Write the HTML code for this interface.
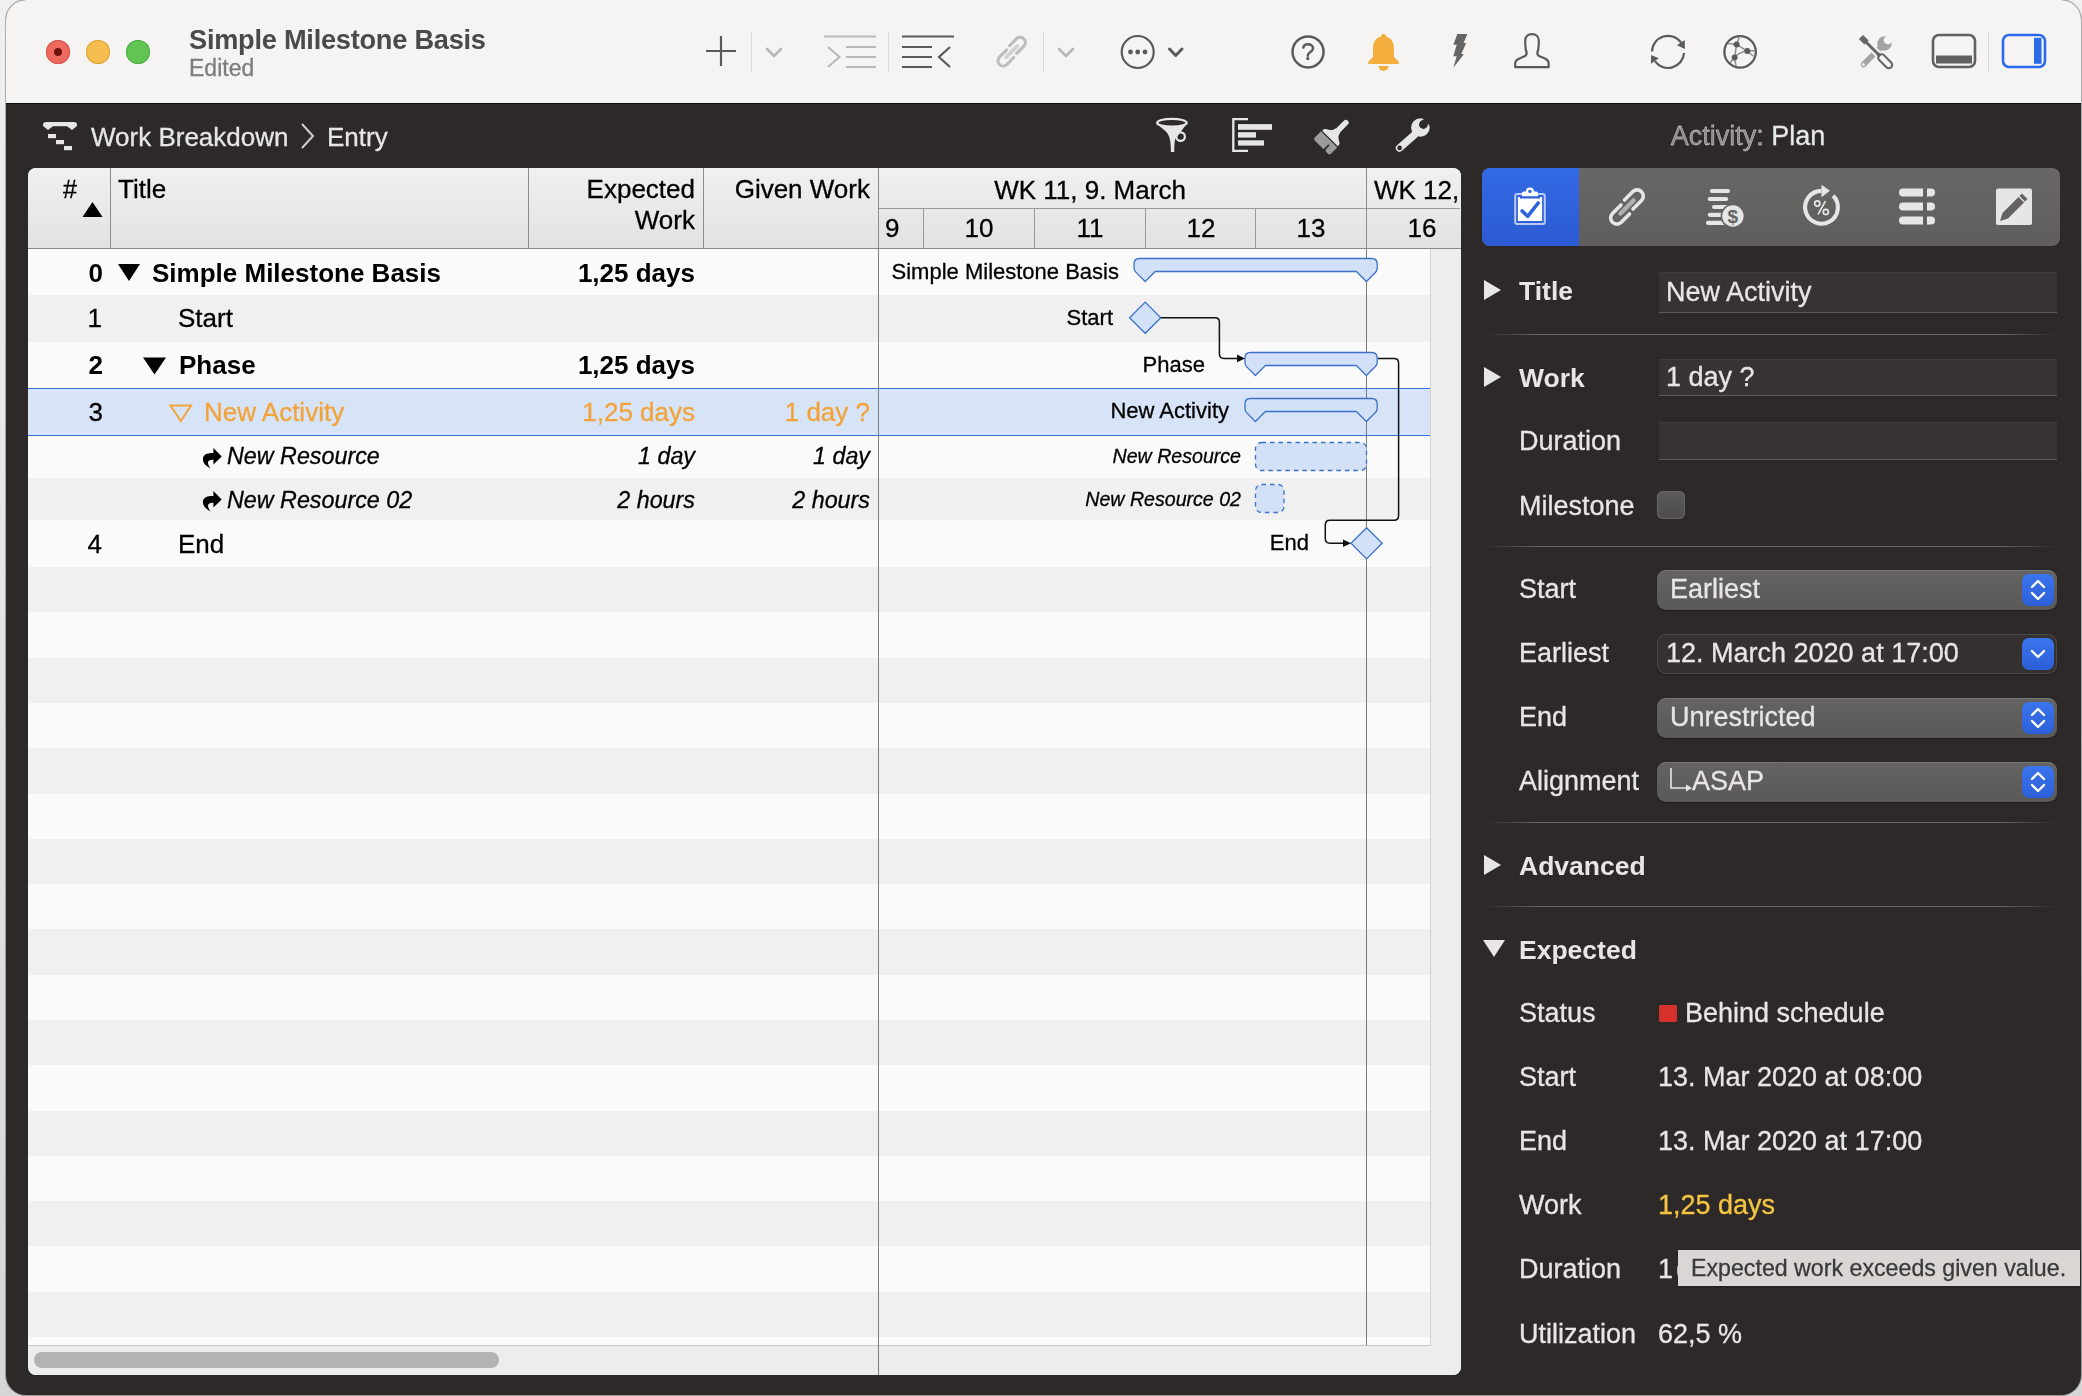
<!DOCTYPE html><html><head><meta charset="utf-8"><style>
html,body{margin:0;padding:0;}
body{width:2082px;height:1396px;position:relative;overflow:hidden;background:linear-gradient(#f0f0f0,#d6d6d6);font-family:"Liberation Sans", sans-serif;}
.r{position:absolute;}
.t{position:absolute;white-space:nowrap;will-change:transform;}
</style></head><body>
<div class="r" style="left:6px;top:0;width:2075px;height:1395px;border-radius:20px;background:#2c2928;box-shadow:0 0 0 1px rgba(0,0,0,0.28);overflow:hidden;"></div>
<div class="r" style="left:6px;top:0;width:2075px;height:103px;border-radius:20px 20px 0 0;background:#f5f4f3;"></div>
<div class="r" style="left:6px;top:103px;width:2075px;height:1px;background:#0e0e0e;"></div>
<div class="r" style="left:46px;top:40px;width:24px;height:24px;border-radius:50%;background:#ee6a5f;box-shadow:inset 0 0 0 1px #d5534a;"></div>
<div class="r" style="left:86px;top:40px;width:24px;height:24px;border-radius:50%;background:#f5be4f;box-shadow:inset 0 0 0 1px #d9a23a;"></div>
<div class="r" style="left:126px;top:40px;width:24px;height:24px;border-radius:50%;background:#61c554;box-shadow:inset 0 0 0 1px #4eab42;"></div>
<div class="r" style="left:54px;top:48px;width:8px;height:8px;border-radius:50%;background:#6e120c;"></div>
<div class="t" style="left:188.5px;top:25.5px;font-size:27.2px;line-height:27.2px;color:#4a4a4a;font-weight:bold;font-style:normal;letter-spacing:-0.25px;">Simple Milestone Basis</div>
<div class="t" style="left:189.0px;top:57.0px;font-size:23px;line-height:23px;color:#7d7d7d;font-weight:normal;font-style:normal;-webkit-text-stroke:0.3px #7d7d7d;">Edited</div>
<svg class="r" style="left:40px;top:118px;" width="40" height="36" viewBox="0 0 40 36"><g fill="#e6e6e6"><path d="M6,4 H34 Q37,4 37,7 V8 L32,12 L27,8.3 H13 L8,12 L3,8 V7 Q3,4 6,4 Z"/>
<rect x="8" y="16" width="8" height="4.2"/><rect x="16" y="22" width="8" height="4.2"/><rect x="24" y="28" width="8" height="4.2"/></g></svg>
<div class="t" style="left:91.0px;top:124.0px;font-size:26px;line-height:26px;color:#e6e6e6;font-weight:normal;font-style:normal;-webkit-text-stroke:0.3px #e6e6e6;">Work Breakdown</div>
<svg class="r" style="left:298px;top:122px;" width="20" height="28" viewBox="0 0 20 28"><path d="M4,2 L15,14 L4,26" fill="none" stroke="#cfcfcf" stroke-width="2"/></svg>
<div class="t" style="left:327.0px;top:124.0px;font-size:26px;line-height:26px;color:#e6e6e6;font-weight:normal;font-style:normal;-webkit-text-stroke:0.3px #e6e6e6;">Entry</div>
<div class="t" style="left:1147.5px;width:1200px;text-align:center;top:123.4px;font-size:27px;line-height:27px;color:#e8e8e8;font-weight:normal;font-style:normal;-webkit-text-stroke:0.3px #e8e8e8;"><span style="color:#8d8b8a">Activity:</span> Plan</div>
<div class="r" style="left:28px;top:168px;width:1433px;height:1207px;border-radius:8px;background:#ededed;overflow:hidden;" id="panel"></div>
<div class="r" style="left:28px;top:168px;width:1433px;height:80px;border-radius:8px 8px 0 0;background:linear-gradient(#f0f0f0,#e2e2e2);"></div>
<div class="r" style="left:28px;top:248px;width:1433px;height:1px;background:#8a8a8a;"></div>
<div class="r" style="left:110px;top:168px;width:1px;height:80px;background:#8c8c8c;"></div>
<div class="r" style="left:528px;top:168px;width:1px;height:80px;background:#8c8c8c;"></div>
<div class="r" style="left:703px;top:168px;width:1px;height:80px;background:#8c8c8c;"></div>
<div class="r" style="left:878px;top:168px;width:1px;height:1207px;background:#8a8a8a;"></div>
<div class="r" style="left:879px;top:208px;width:581px;height:1px;background:#9a9a9a;"></div>
<div class="r" style="left:923px;top:208px;width:1px;height:40px;background:#9a9a9a;"></div>
<div class="r" style="left:1034px;top:208px;width:1px;height:40px;background:#9a9a9a;"></div>
<div class="r" style="left:1145px;top:208px;width:1px;height:40px;background:#9a9a9a;"></div>
<div class="r" style="left:1255px;top:208px;width:1px;height:40px;background:#9a9a9a;"></div>
<div class="r" style="left:1366px;top:168px;width:1px;height:80px;background:#8c8c8c;"></div>
<div class="t" style="left:-1123.0px;width:1200px;text-align:right;top:176.8px;font-size:25px;line-height:25px;color:#000;font-weight:normal;font-style:normal;-webkit-text-stroke:0.3px #000;">#</div>
<svg class="r" style="left:82px;top:202px;" width="21" height="16" viewBox="0 0 21 16"><path d="M10.5,0 L20.5,15 H0.5 Z" fill="#000"/></svg>
<div class="t" style="left:118.0px;top:176.0px;font-size:26px;line-height:26px;color:#000;font-weight:normal;font-style:normal;-webkit-text-stroke:0.3px #000;">Title</div>
<div class="t" style="left:-505.0px;width:1200px;text-align:right;top:176.0px;font-size:26px;line-height:26px;color:#000;font-weight:normal;font-style:normal;-webkit-text-stroke:0.3px #000;">Expected</div>
<div class="t" style="left:-505.0px;width:1200px;text-align:right;top:207.0px;font-size:26px;line-height:26px;color:#000;font-weight:normal;font-style:normal;-webkit-text-stroke:0.3px #000;">Work</div>
<div class="t" style="left:-330.0px;width:1200px;text-align:right;top:176.0px;font-size:26px;line-height:26px;color:#000;font-weight:normal;font-style:normal;-webkit-text-stroke:0.3px #000;">Given Work</div>
<div class="t" style="left:489.6px;width:1200px;text-align:center;top:176.5px;font-size:26px;line-height:26px;color:#000;font-weight:normal;font-style:normal;-webkit-text-stroke:0.3px #000;">WK 11, 9. March</div>
<div class="t" style="left:1374.0px;top:176.5px;font-size:26px;line-height:26px;color:#000;font-weight:normal;font-style:normal;-webkit-text-stroke:0.3px #000;">WK 12,</div>
<div class="t" style="left:885.0px;top:215.0px;font-size:26px;line-height:26px;color:#000;font-weight:normal;font-style:normal;-webkit-text-stroke:0.3px #000;">9</div>
<div class="t" style="left:379.0px;width:1200px;text-align:center;top:215.0px;font-size:26px;line-height:26px;color:#000;font-weight:normal;font-style:normal;-webkit-text-stroke:0.3px #000;">10</div>
<div class="t" style="left:490.0px;width:1200px;text-align:center;top:215.0px;font-size:26px;line-height:26px;color:#000;font-weight:normal;font-style:normal;-webkit-text-stroke:0.3px #000;">11</div>
<div class="t" style="left:600.5px;width:1200px;text-align:center;top:215.0px;font-size:26px;line-height:26px;color:#000;font-weight:normal;font-style:normal;-webkit-text-stroke:0.3px #000;">12</div>
<div class="t" style="left:711.0px;width:1200px;text-align:center;top:215.0px;font-size:26px;line-height:26px;color:#000;font-weight:normal;font-style:normal;-webkit-text-stroke:0.3px #000;">13</div>
<div class="t" style="left:821.5px;width:1200px;text-align:center;top:215.0px;font-size:26px;line-height:26px;color:#000;font-weight:normal;font-style:normal;-webkit-text-stroke:0.3px #000;">16</div>
<div class="r" style="left:28px;top:249px;width:850px;height:46px;background:#fafafa;"></div>
<div class="r" style="left:879px;top:249px;width:552px;height:46px;background:#fafafa;"></div>
<div class="r" style="left:28px;top:295px;width:850px;height:47px;background:#f0f0f0;"></div>
<div class="r" style="left:879px;top:295px;width:552px;height:47px;background:#f0f0f0;"></div>
<div class="r" style="left:28px;top:342px;width:850px;height:46px;background:#fafafa;"></div>
<div class="r" style="left:879px;top:342px;width:552px;height:46px;background:#fafafa;"></div>
<div class="r" style="left:28px;top:388px;width:850px;height:48px;background:#d7e3f6;"></div>
<div class="r" style="left:879px;top:388px;width:552px;height:48px;background:#d7e3f6;"></div>
<div class="r" style="left:28px;top:436px;width:850px;height:42px;background:#fafafa;"></div>
<div class="r" style="left:879px;top:436px;width:552px;height:42px;background:#fafafa;"></div>
<div class="r" style="left:28px;top:478px;width:850px;height:42px;background:#f0f0f0;"></div>
<div class="r" style="left:879px;top:478px;width:552px;height:42px;background:#f0f0f0;"></div>
<div class="r" style="left:28px;top:520px;width:850px;height:47px;background:#fafafa;"></div>
<div class="r" style="left:879px;top:520px;width:552px;height:47px;background:#fafafa;"></div>
<div class="r" style="left:28px;top:567px;width:850px;height:45px;background:#f0f0f0;"></div>
<div class="r" style="left:879px;top:567px;width:552px;height:45px;background:#f0f0f0;"></div>
<div class="r" style="left:28px;top:612px;width:850px;height:46px;background:#fafafa;"></div>
<div class="r" style="left:879px;top:612px;width:552px;height:46px;background:#fafafa;"></div>
<div class="r" style="left:28px;top:658px;width:850px;height:45px;background:#f0f0f0;"></div>
<div class="r" style="left:879px;top:658px;width:552px;height:45px;background:#f0f0f0;"></div>
<div class="r" style="left:28px;top:703px;width:850px;height:45px;background:#fafafa;"></div>
<div class="r" style="left:879px;top:703px;width:552px;height:45px;background:#fafafa;"></div>
<div class="r" style="left:28px;top:748px;width:850px;height:46px;background:#f0f0f0;"></div>
<div class="r" style="left:879px;top:748px;width:552px;height:46px;background:#f0f0f0;"></div>
<div class="r" style="left:28px;top:794px;width:850px;height:45px;background:#fafafa;"></div>
<div class="r" style="left:879px;top:794px;width:552px;height:45px;background:#fafafa;"></div>
<div class="r" style="left:28px;top:839px;width:850px;height:45px;background:#f0f0f0;"></div>
<div class="r" style="left:879px;top:839px;width:552px;height:45px;background:#f0f0f0;"></div>
<div class="r" style="left:28px;top:884px;width:850px;height:45px;background:#fafafa;"></div>
<div class="r" style="left:879px;top:884px;width:552px;height:45px;background:#fafafa;"></div>
<div class="r" style="left:28px;top:929px;width:850px;height:46px;background:#f0f0f0;"></div>
<div class="r" style="left:879px;top:929px;width:552px;height:46px;background:#f0f0f0;"></div>
<div class="r" style="left:28px;top:975px;width:850px;height:45px;background:#fafafa;"></div>
<div class="r" style="left:879px;top:975px;width:552px;height:45px;background:#fafafa;"></div>
<div class="r" style="left:28px;top:1020px;width:850px;height:45px;background:#f0f0f0;"></div>
<div class="r" style="left:879px;top:1020px;width:552px;height:45px;background:#f0f0f0;"></div>
<div class="r" style="left:28px;top:1065px;width:850px;height:46px;background:#fafafa;"></div>
<div class="r" style="left:879px;top:1065px;width:552px;height:46px;background:#fafafa;"></div>
<div class="r" style="left:28px;top:1111px;width:850px;height:45px;background:#f0f0f0;"></div>
<div class="r" style="left:879px;top:1111px;width:552px;height:45px;background:#f0f0f0;"></div>
<div class="r" style="left:28px;top:1156px;width:850px;height:45px;background:#fafafa;"></div>
<div class="r" style="left:879px;top:1156px;width:552px;height:45px;background:#fafafa;"></div>
<div class="r" style="left:28px;top:1201px;width:850px;height:45px;background:#f0f0f0;"></div>
<div class="r" style="left:879px;top:1201px;width:552px;height:45px;background:#f0f0f0;"></div>
<div class="r" style="left:28px;top:1246px;width:850px;height:46px;background:#fafafa;"></div>
<div class="r" style="left:879px;top:1246px;width:552px;height:46px;background:#fafafa;"></div>
<div class="r" style="left:28px;top:1292px;width:850px;height:45px;background:#f0f0f0;"></div>
<div class="r" style="left:879px;top:1292px;width:552px;height:45px;background:#f0f0f0;"></div>
<div class="r" style="left:28px;top:1337px;width:850px;height:8px;background:#fafafa;"></div>
<div class="r" style="left:879px;top:1337px;width:552px;height:8px;background:#fafafa;"></div>
<div class="r" style="left:28px;top:388px;width:1403px;height:1px;background:#3a72dc;"></div>
<div class="r" style="left:28px;top:435px;width:1403px;height:1px;background:#3a72dc;"></div>
<div class="r" style="left:878px;top:248px;width:1px;height:1127px;background:#7e7e7e;"></div>
<div class="r" style="left:1431px;top:249px;width:30px;height:1096px;background:#ededed;"></div>
<div class="r" style="left:1430px;top:249px;width:1px;height:1096px;background:#d2d2d2;"></div>
<div class="r" style="left:28px;top:1345px;width:1403px;height:1px;background:#c6c6c6;"></div>
<div class="r" style="left:28px;top:1346px;width:1433px;height:29px;background:#ededed;border-radius:0 0 8px 8px;"></div>
<div class="r" style="left:878px;top:1345px;width:1px;height:30px;background:#7e7e7e;"></div>
<div class="r" style="left:34px;top:1352px;width:465px;height:16px;border-radius:8px;background:#b3b3b3;"></div>
<div class="r" style="left:1366px;top:249px;width:1px;height:1096px;background:#7a7a7a;"></div>
<div class="t" style="left:-1097.0px;width:1200px;text-align:right;top:260.0px;font-size:26px;line-height:26px;color:#000;font-weight:bold;font-style:normal;">0</div>
<svg class="r" style="left:117px;top:263px;" width="24" height="19" viewBox="0 0 24 19"><path d="M1,1 H23 L12,18 Z" fill="#000"/></svg>
<div class="t" style="left:152.0px;top:260.0px;font-size:26px;line-height:26px;color:#000;font-weight:bold;font-style:normal;">Simple Milestone Basis</div>
<div class="t" style="left:-505.0px;width:1200px;text-align:right;top:260.0px;font-size:26px;line-height:26px;color:#000;font-weight:bold;font-style:normal;">1,25 days</div>
<div class="t" style="left:-1098.0px;width:1200px;text-align:right;top:305.0px;font-size:26px;line-height:26px;color:#000;font-weight:normal;font-style:normal;-webkit-text-stroke:0.3px #000;">1</div>
<div class="t" style="left:177.5px;top:305.0px;font-size:26px;line-height:26px;color:#000;font-weight:normal;font-style:normal;-webkit-text-stroke:0.3px #000;">Start</div>
<div class="t" style="left:-1097.0px;width:1200px;text-align:right;top:352.0px;font-size:26px;line-height:26px;color:#000;font-weight:bold;font-style:normal;">2</div>
<svg class="r" style="left:142px;top:356px;" width="25" height="19" viewBox="0 0 25 19"><path d="M1,1.5 H24 L12.5,18.5 Z" fill="#000"/></svg>
<div class="t" style="left:178.5px;top:352.0px;font-size:26px;line-height:26px;color:#000;font-weight:bold;font-style:normal;">Phase</div>
<div class="t" style="left:-505.0px;width:1200px;text-align:right;top:352.0px;font-size:26px;line-height:26px;color:#000;font-weight:bold;font-style:normal;">1,25 days</div>
<div class="t" style="left:-1097.0px;width:1200px;text-align:right;top:399.0px;font-size:26px;line-height:26px;color:#000;font-weight:normal;font-style:normal;-webkit-text-stroke:0.3px #000;">3</div>
<svg class="r" style="left:168px;top:403px;" width="26" height="20" viewBox="0 0 26 20"><path d="M2.5,2.5 H23 L12.75,18 Z" fill="none" stroke="#f2a33a" stroke-width="2"/></svg>
<div class="t" style="left:204.0px;top:399.0px;font-size:26px;line-height:26px;color:#f2a33a;font-weight:normal;font-style:normal;-webkit-text-stroke:0.3px #f2a33a;">New Activity</div>
<div class="t" style="left:-505.0px;width:1200px;text-align:right;top:399.0px;font-size:26px;line-height:26px;color:#f2a33a;font-weight:normal;font-style:normal;-webkit-text-stroke:0.3px #f2a33a;">1,25 days</div>
<div class="t" style="left:-330.0px;width:1200px;text-align:right;top:399.0px;font-size:26px;line-height:26px;color:#f2a33a;font-weight:normal;font-style:normal;-webkit-text-stroke:0.3px #f2a33a;">1 day ?</div>
<svg class="r" style="left:195px;top:440px;" width="30" height="32" viewBox="0 0 30 32"><path d="M18.4,8 L26.7,16.4 L18.4,24.4 V19.8 C15,19.6 12.5,20.8 13,23.5 C13.5,25.5 14.5,27 15.5,28.6 C11,26 8,23 7.9,19.5 C7.8,15 11,13 18.4,13 Z" fill="#000"/></svg>
<div class="t" style="left:227.0px;top:445.3px;font-size:23.3px;line-height:23.3px;color:#000;font-weight:normal;font-style:italic;-webkit-text-stroke:0.3px #000;">New Resource</div>
<div class="t" style="left:-505.0px;width:1200px;text-align:right;top:445.3px;font-size:23.3px;line-height:23.3px;color:#000;font-weight:normal;font-style:italic;-webkit-text-stroke:0.3px #000;">1 day</div>
<div class="t" style="left:-330.0px;width:1200px;text-align:right;top:445.3px;font-size:23.3px;line-height:23.3px;color:#000;font-weight:normal;font-style:italic;-webkit-text-stroke:0.3px #000;">1 day</div>
<svg class="r" style="left:195px;top:483px;" width="30" height="32" viewBox="0 0 30 32"><path d="M18.4,8 L26.7,16.4 L18.4,24.4 V19.8 C15,19.6 12.5,20.8 13,23.5 C13.5,25.5 14.5,27 15.5,28.6 C11,26 8,23 7.9,19.5 C7.8,15 11,13 18.4,13 Z" fill="#000"/></svg>
<div class="t" style="left:227.0px;top:488.8px;font-size:23.3px;line-height:23.3px;color:#000;font-weight:normal;font-style:italic;-webkit-text-stroke:0.3px #000;">New Resource 02</div>
<div class="t" style="left:-505.0px;width:1200px;text-align:right;top:488.8px;font-size:23.3px;line-height:23.3px;color:#000;font-weight:normal;font-style:italic;-webkit-text-stroke:0.3px #000;">2 hours</div>
<div class="t" style="left:-330.0px;width:1200px;text-align:right;top:488.8px;font-size:23.3px;line-height:23.3px;color:#000;font-weight:normal;font-style:italic;-webkit-text-stroke:0.3px #000;">2 hours</div>
<div class="t" style="left:-1098.0px;width:1200px;text-align:right;top:531.0px;font-size:26px;line-height:26px;color:#000;font-weight:normal;font-style:normal;-webkit-text-stroke:0.3px #000;">4</div>
<div class="t" style="left:177.5px;top:531.0px;font-size:26px;line-height:26px;color:#000;font-weight:normal;font-style:normal;-webkit-text-stroke:0.3px #000;">End</div>
<svg class="r" style="left:0;top:0" width="2082" height="1396" viewBox="0 0 2082 1396"><path d="M1139.5,258.5 H1371.7 Q1377.2,258.5 1377.2,264.0 V268.20000000000005 Q1377.2,270.70000000000005 1375.4,272.50000000000006 L1366.4,281.5 L1356.4,271.5 H1155.2 L1145.2,281.5 L1135.8,272.09999999999997 Q1134,270.29999999999995 1134,267.79999999999995 V264.0 Q1134,258.5 1139.5,258.5 Z" fill="#d3e1f8" stroke="#3b71c6" stroke-width="1.3" stroke-linejoin="round"/><path d="M1250.5,352.5 H1371.7 Q1377.2,352.5 1377.2,358.0 V362.20000000000005 Q1377.2,364.70000000000005 1375.4,366.50000000000006 L1366.4,375.5 L1356.4,365.5 H1265.4 L1255.4,375.5 L1246.8,366.8999999999999 Q1245,365.0999999999999 1245,362.5999999999999 V358.0 Q1245,352.5 1250.5,352.5 Z" fill="#d3e1f8" stroke="#3b71c6" stroke-width="1.3" stroke-linejoin="round"/><path d="M1250.5,398.5 H1371.7 Q1377.2,398.5 1377.2,404.0 V408.20000000000005 Q1377.2,410.70000000000005 1375.4,412.50000000000006 L1366.4,421.5 L1356.4,411.5 H1265.4 L1255.4,421.5 L1246.8,412.8999999999999 Q1245,411.0999999999999 1245,408.5999999999999 V404.0 Q1245,398.5 1250.5,398.5 Z" fill="#d3e1f8" stroke="#3b71c6" stroke-width="1.3" stroke-linejoin="round"/><path d="M1145.2,302.09999999999997 L1160.8,317.7 L1145.2,333.3 L1129.6000000000001,317.7 Z" fill="#d3e1f8" stroke="#3b71c6" stroke-width="1.3"/><path d="M1366.6,527.6999999999999 L1382.1999999999998,543.3 L1366.6,558.9 L1351.0,543.3 Z" fill="#d3e1f8" stroke="#3b71c6" stroke-width="1.3"/><rect x="1255.5" y="442.5" width="111" height="28" rx="6" fill="#d3e1f8" stroke="#3b71c6" stroke-width="1.3" stroke-dasharray="4.5 4"/><rect x="1255.5" y="484.5" width="28.5" height="28" rx="6" fill="#d3e1f8" stroke="#3b71c6" stroke-width="1.3" stroke-dasharray="4.5 4"/><path d="M1161,317.7 H1215 Q1219.4,317.7 1219.4,322 V354 Q1219.4,358.4 1224,358.4 H1238" fill="none" stroke="#111" stroke-width="1.5"/><path d="M1237,354.6 L1245,358.4 L1237,362.2 Z" fill="#111"/><path d="M1378,358.4 H1394 Q1398.6,358.4 1398.6,363 V515.5 Q1398.6,520.3 1394,520.3 H1330 Q1325.3,520.3 1325.3,525 V538.6 Q1325.3,543.3 1330,543.3 H1344" fill="none" stroke="#111" stroke-width="1.5"/><path d="M1343,539.5 L1351,543.3 L1343,547.1 Z" fill="#111"/></svg>
<div class="t" style="left:-81.5px;width:1200px;text-align:right;top:261.4px;font-size:22px;line-height:22px;color:#000;font-weight:normal;font-style:normal;-webkit-text-stroke:0.3px #000;">Simple Milestone Basis</div>
<div class="t" style="left:-87.5px;width:1200px;text-align:right;top:307.4px;font-size:22px;line-height:22px;color:#000;font-weight:normal;font-style:normal;-webkit-text-stroke:0.3px #000;">Start</div>
<div class="t" style="left:5.0px;width:1200px;text-align:right;top:354.1px;font-size:22px;line-height:22px;color:#000;font-weight:normal;font-style:normal;-webkit-text-stroke:0.3px #000;">Phase</div>
<div class="t" style="left:29.3px;width:1200px;text-align:right;top:400.4px;font-size:22px;line-height:22px;color:#000;font-weight:normal;font-style:normal;-webkit-text-stroke:0.3px #000;">New Activity</div>
<div class="t" style="left:40.5px;width:1200px;text-align:right;top:447.4px;font-size:19.6px;line-height:19.6px;color:#000;font-weight:normal;font-style:italic;-webkit-text-stroke:0.3px #000;">New Resource</div>
<div class="t" style="left:40.5px;width:1200px;text-align:right;top:490.1px;font-size:19.6px;line-height:19.6px;color:#000;font-weight:normal;font-style:italic;-webkit-text-stroke:0.3px #000;">New Resource 02</div>
<div class="t" style="left:109.0px;width:1200px;text-align:right;top:532.2px;font-size:22px;line-height:22px;color:#000;font-weight:normal;font-style:normal;-webkit-text-stroke:0.3px #000;">End</div>
<div class="r" style="left:1482px;top:168px;width:578px;height:78px;border-radius:8px;background:linear-gradient(#686766,#5f5e5d);overflow:hidden;"><div class="r" style="left:0;top:0;width:97px;height:78px;background:linear-gradient(#3369e4,#2b5bd2);"></div></div>
<svg class="r" style="left:1510px;top:184px;" width="40" height="44" viewBox="0 0 40 44"><rect x="5.2" y="10.1" width="29.6" height="29.8" rx="2" fill="none" stroke="#b9c9f2" stroke-width="2"/>
<rect x="7.9" y="13" width="24.2" height="24" fill="#fff"/>
<rect x="10" y="12.2" width="20" height="2.3" fill="#2c60d8"/>
<path d="M11.8,12.2 V9.5 Q11.8,7.5 13.8,7.5 H26 Q28,7.5 28,9.5 V12.2 Z" fill="#fff"/>
<circle cx="19.9" cy="7.4" r="4" fill="#fff"/><circle cx="19.9" cy="7.4" r="1.7" fill="#2e63dd"/>
<path d="M12.1,26.9 L17.7,32.3 L28.2,19" fill="none" stroke="#2e63dd" stroke-width="3.6" stroke-linecap="round" stroke-linejoin="round"/></svg>
<svg class="r" style="left:1606px;top:186px;" width="42" height="42" viewBox="0 0 42 42"><g fill="none" stroke="#e6e6e6" stroke-width="3.6" stroke-linecap="round">
<path d="M15,19 L6.5,27.5 A6.2,6.2 0 0 0 15.3,36.3 L23.5,28"/>
<path d="M27,23 L35.5,14.5 A6.2,6.2 0 0 0 26.7,5.7 L18.5,14"/></g>
<path d="M14.5,27.5 L27.5,14.5" stroke="#b0b0b0" stroke-width="4.5" stroke-linecap="round"/></svg>
<svg class="r" style="left:1704px;top:186px;" width="46" height="46" viewBox="0 0 46 46"><g fill="#e6e6e6"><rect x="5.9" y="3" width="20.1" height="4.1" rx="2.05"/><rect x="3.7" y="11" width="20.5" height="4.1" rx="2.05"/>
<rect x="8" y="18.9" width="18" height="4.1" rx="2.05"/><rect x="3.7" y="26.8" width="20" height="4.1" rx="2.05"/><rect x="1.9" y="34.7" width="20" height="4.2" rx="2.05"/>
<circle cx="28.9" cy="30" r="11.5" stroke="#646362" stroke-width="1.6"/></g>
<text x="28.9" y="36.6" font-family="Liberation Sans" font-weight="bold" font-size="19" text-anchor="middle" fill="#646362">$</text></svg>
<svg class="r" style="left:1798px;top:180px;" width="48" height="50" viewBox="0 0 48 50"><path d="M23.5,10.9 A16.4,16.4 0 1 0 35.1,15.7" fill="none" stroke="#e6e6e6" stroke-width="4.1"/>
<path d="M23.5,4.7 L31.9,10.7 L23.5,17.2 Z" fill="#e6e6e6"/>
<g fill="none" stroke="#e6e6e6" stroke-width="1.7"><circle cx="19.3" cy="23.5" r="2.6"/><circle cx="27.8" cy="31.9" r="2.6"/><path d="M27.4,21.1 L20.1,34.4"/></g></svg>
<svg class="r" style="left:1897px;top:186px;" width="40" height="42" viewBox="0 0 40 42"><g fill="#e6e6e6"><path d="M6,2.5 H26 V10.5 H6 A4,4 0 0 1 6,2.5 Z"/><path d="M6,16.5 H26 V24.5 H6 A4,4 0 0 1 6,16.5 Z"/><path d="M6,30.5 H26 V38.5 H6 A4,4 0 0 1 6,30.5 Z"/>
<path d="M30,2.5 H34 A4,4 0 0 1 34,10.5 H30 Z"/><path d="M30,16.5 H34 A4,4 0 0 1 34,24.5 H30 Z"/><path d="M30,30.5 H34 A4,4 0 0 1 34,38.5 H30 Z"/></g></svg>
<svg class="r" style="left:1994px;top:186px;" width="40" height="42" viewBox="0 0 40 42"><rect x="2" y="2.5" width="36" height="36.5" rx="2" fill="#e6e6e6"/>
<path d="M6,35 L8.5,27 L28,7.5 L33.5,13 L14,32.5 Z" fill="#646362"/><path d="M25,10.5 L30.5,16" stroke="#e6e6e6" stroke-width="1.3"/></svg>
<svg class="r" style="left:1483px;top:279px;" width="20" height="22" viewBox="0 0 20 22"><path d="M1,1 L18,11 L1,21 Z" fill="#e8e6e5"/></svg>
<div class="t" style="left:1519.0px;top:277.9px;font-size:26.5px;line-height:26.5px;color:#e8e6e5;font-weight:bold;font-style:normal;">Title</div>
<div class="r" style="left:1659px;top:272px;width:398px;height:41px;background:#363332;box-shadow:inset 0 -1px 0 #5e5b5a, inset 0 1px 0 #3e3b3a;"></div>
<div class="t" style="left:1666.0px;top:279.1px;font-size:27px;line-height:27px;color:#e8e6e5;font-weight:normal;font-style:normal;-webkit-text-stroke:0.3px #e8e6e5;">New Activity</div>
<div class="r" style="left:1484px;top:334px;width:574px;height:1px;background:linear-gradient(90deg,rgba(120,118,117,0),#6a6867 10%,#6a6867 90%,rgba(120,118,117,0));"></div>
<svg class="r" style="left:1483px;top:366px;" width="20" height="22" viewBox="0 0 20 22"><path d="M1,1 L18,11 L1,21 Z" fill="#e8e6e5"/></svg>
<div class="t" style="left:1519.0px;top:365.1px;font-size:26.5px;line-height:26.5px;color:#e8e6e5;font-weight:bold;font-style:normal;">Work</div>
<div class="r" style="left:1659px;top:359px;width:398px;height:37px;background:#363332;box-shadow:inset 0 -1px 0 #5e5b5a, inset 0 1px 0 #3e3b3a;"></div>
<div class="t" style="left:1666.0px;top:364.1px;font-size:27px;line-height:27px;color:#e8e6e5;font-weight:normal;font-style:normal;-webkit-text-stroke:0.3px #e8e6e5;">1 day ?</div>
<div class="t" style="left:1519.0px;top:428.3px;font-size:27px;line-height:27px;color:#e8e6e5;font-weight:normal;font-style:normal;-webkit-text-stroke:0.3px #e8e6e5;">Duration</div>
<div class="r" style="left:1659px;top:422px;width:398px;height:38px;background:#363332;box-shadow:inset 0 -1px 0 #5e5b5a, inset 0 1px 0 #3e3b3a;"></div>
<div class="t" style="left:1519.0px;top:492.5px;font-size:27px;line-height:27px;color:#e8e6e5;font-weight:normal;font-style:normal;-webkit-text-stroke:0.3px #e8e6e5;">Milestone</div>
<div class="r" style="left:1657px;top:491px;width:28px;height:28px;border-radius:6px;background:linear-gradient(#5c5a59,#4f4d4c);box-shadow:inset 0 0 0 1px #6a6867;"></div>
<div class="r" style="left:1484px;top:546px;width:574px;height:1px;background:linear-gradient(90deg,rgba(120,118,117,0),#6a6867 10%,#6a6867 90%,rgba(120,118,117,0));"></div>
<div class="t" style="left:1519.0px;top:575.9px;font-size:27px;line-height:27px;color:#e8e6e5;font-weight:normal;font-style:normal;-webkit-text-stroke:0.3px #e8e6e5;">Start</div>
<div class="r" style="left:1657px;top:570px;width:400px;height:40px;border-radius:9px;background:linear-gradient(#656362,#5b5958);box-shadow:inset 0 1px 0 #777574, 0 1px 1px rgba(0,0,0,0.3);"></div>
<div class="r" style="left:2022px;top:574px;width:32px;height:32px;border-radius:7px;background:linear-gradient(#3a74ee,#2c5fd6);"></div>
<svg class="r" style="left:2028px;top:577px;" width="20" height="26" viewBox="0 0 20 26"><path d="M4,10 L10,4 L16,10 M4,16 L10,22 L16,16" fill="none" stroke="#fff" stroke-width="2.4" stroke-linecap="round" stroke-linejoin="round"/></svg>
<div class="t" style="left:1670.0px;top:575.9px;font-size:27px;line-height:27px;color:#e8e6e5;font-weight:normal;font-style:normal;-webkit-text-stroke:0.3px #e8e6e5;">Earliest</div>
<div class="t" style="left:1519.0px;top:640.1px;font-size:27px;line-height:27px;color:#e8e6e5;font-weight:normal;font-style:normal;-webkit-text-stroke:0.3px #e8e6e5;">Earliest</div>
<div class="r" style="left:1657px;top:634px;width:400px;height:40px;border-radius:9px;background:#343130;box-shadow:inset 0 0 0 1px #4c4948, 0 1px 1px rgba(0,0,0,0.3);"></div>
<div class="r" style="left:2022px;top:638px;width:32px;height:32px;border-radius:7px;background:linear-gradient(#3a74ee,#2c5fd6);"></div>
<svg class="r" style="left:2028px;top:644px;" width="20" height="20" viewBox="0 0 20 20"><path d="M4,7 L10,13 L16,7" fill="none" stroke="#fff" stroke-width="2.4" stroke-linecap="round" stroke-linejoin="round"/></svg>
<div class="t" style="left:1666.0px;top:640.1px;font-size:27px;line-height:27px;color:#e8e6e5;font-weight:normal;font-style:normal;-webkit-text-stroke:0.3px #e8e6e5;">12. March 2020 at 17:00</div>
<div class="t" style="left:1519.0px;top:703.8px;font-size:27px;line-height:27px;color:#e8e6e5;font-weight:normal;font-style:normal;-webkit-text-stroke:0.3px #e8e6e5;">End</div>
<div class="r" style="left:1657px;top:698px;width:400px;height:40px;border-radius:9px;background:linear-gradient(#656362,#5b5958);box-shadow:inset 0 1px 0 #777574, 0 1px 1px rgba(0,0,0,0.3);"></div>
<div class="r" style="left:2022px;top:702px;width:32px;height:32px;border-radius:7px;background:linear-gradient(#3a74ee,#2c5fd6);"></div>
<svg class="r" style="left:2028px;top:705px;" width="20" height="26" viewBox="0 0 20 26"><path d="M4,10 L10,4 L16,10 M4,16 L10,22 L16,16" fill="none" stroke="#fff" stroke-width="2.4" stroke-linecap="round" stroke-linejoin="round"/></svg>
<div class="t" style="left:1670.0px;top:703.8px;font-size:27px;line-height:27px;color:#e8e6e5;font-weight:normal;font-style:normal;-webkit-text-stroke:0.3px #e8e6e5;">Unrestricted</div>
<div class="t" style="left:1519.0px;top:767.7px;font-size:27px;line-height:27px;color:#e8e6e5;font-weight:normal;font-style:normal;-webkit-text-stroke:0.3px #e8e6e5;">Alignment</div>
<div class="r" style="left:1657px;top:762px;width:400px;height:40px;border-radius:9px;background:linear-gradient(#656362,#5b5958);box-shadow:inset 0 1px 0 #777574, 0 1px 1px rgba(0,0,0,0.3);"></div>
<div class="r" style="left:2022px;top:766px;width:32px;height:32px;border-radius:7px;background:linear-gradient(#3a74ee,#2c5fd6);"></div>
<svg class="r" style="left:2028px;top:769px;" width="20" height="26" viewBox="0 0 20 26"><path d="M4,10 L10,4 L16,10 M4,16 L10,22 L16,16" fill="none" stroke="#fff" stroke-width="2.4" stroke-linecap="round" stroke-linejoin="round"/></svg>
<svg class="r" style="left:1668px;top:764.5px;" width="26" height="30" viewBox="0 0 26 30"><path d="M3,3 V23 H20" fill="none" stroke="#e8e6e5" stroke-width="1.6"/><path d="M18,19.5 L24,23 L18,26.5 Z" fill="#e8e6e5"/></svg>
<div class="t" style="left:1692.0px;top:767.7px;font-size:27px;line-height:27px;color:#e8e6e5;font-weight:normal;font-style:normal;-webkit-text-stroke:0.3px #e8e6e5;">ASAP</div>
<div class="r" style="left:1484px;top:822px;width:574px;height:1px;background:linear-gradient(90deg,rgba(120,118,117,0),#6a6867 10%,#6a6867 90%,rgba(120,118,117,0));"></div>
<svg class="r" style="left:1483px;top:854px;" width="20" height="22" viewBox="0 0 20 22"><path d="M1,1 L18,11 L1,21 Z" fill="#e8e6e5"/></svg>
<div class="t" style="left:1519.0px;top:853.4px;font-size:26.5px;line-height:26.5px;color:#e8e6e5;font-weight:bold;font-style:normal;">Advanced</div>
<div class="r" style="left:1484px;top:906px;width:574px;height:1px;background:linear-gradient(90deg,rgba(120,118,117,0),#6a6867 10%,#6a6867 90%,rgba(120,118,117,0));"></div>
<svg class="r" style="left:1482px;top:939px;" width="24" height="20" viewBox="0 0 24 20"><path d="M1,1 H23 L12,18 Z" fill="#e8e6e5"/></svg>
<div class="t" style="left:1519.0px;top:937.1px;font-size:26.5px;line-height:26.5px;color:#e8e6e5;font-weight:bold;font-style:normal;">Expected</div>
<div class="t" style="left:1519.0px;top:1000.1px;font-size:27px;line-height:27px;color:#e8e6e5;font-weight:normal;font-style:normal;-webkit-text-stroke:0.3px #e8e6e5;">Status</div>
<div class="r" style="left:1659px;top:1005px;width:18px;height:17px;background:#d7312b;border-radius:2px;"></div>
<div class="t" style="left:1685.0px;top:1000.1px;font-size:27px;line-height:27px;color:#e8e6e5;font-weight:normal;font-style:normal;-webkit-text-stroke:0.3px #e8e6e5;">Behind schedule</div>
<div class="t" style="left:1519.0px;top:1064.4px;font-size:27px;line-height:27px;color:#e8e6e5;font-weight:normal;font-style:normal;-webkit-text-stroke:0.3px #e8e6e5;">Start</div>
<div class="t" style="left:1658.0px;top:1064.4px;font-size:27px;line-height:27px;color:#e8e6e5;font-weight:normal;font-style:normal;-webkit-text-stroke:0.3px #e8e6e5;">13. Mar 2020 at 08:00</div>
<div class="t" style="left:1519.0px;top:1127.8px;font-size:27px;line-height:27px;color:#e8e6e5;font-weight:normal;font-style:normal;-webkit-text-stroke:0.3px #e8e6e5;">End</div>
<div class="t" style="left:1658.0px;top:1127.8px;font-size:27px;line-height:27px;color:#e8e6e5;font-weight:normal;font-style:normal;-webkit-text-stroke:0.3px #e8e6e5;">13. Mar 2020 at 17:00</div>
<div class="t" style="left:1519.0px;top:1191.9px;font-size:27px;line-height:27px;color:#e8e6e5;font-weight:normal;font-style:normal;-webkit-text-stroke:0.3px #e8e6e5;">Work</div>
<div class="t" style="left:1658.0px;top:1191.9px;font-size:27px;line-height:27px;color:#f5c543;font-weight:normal;font-style:normal;-webkit-text-stroke:0.3px #f5c543;">1,25 days</div>
<div class="t" style="left:1519.0px;top:1256.1px;font-size:27px;line-height:27px;color:#e8e6e5;font-weight:normal;font-style:normal;-webkit-text-stroke:0.3px #e8e6e5;">Duration</div>
<div class="t" style="left:1658.0px;top:1256.1px;font-size:27px;line-height:27px;color:#e8e6e5;font-weight:normal;font-style:normal;-webkit-text-stroke:0.3px #e8e6e5;">1</div>
<div class="t" style="left:1675.5px;top:1256.1px;font-size:27px;line-height:27px;color:#e8e6e5;font-weight:normal;font-style:normal;-webkit-text-stroke:0.3px #e8e6e5;">day</div>
<div class="t" style="left:1519.0px;top:1320.5px;font-size:27px;line-height:27px;color:#e8e6e5;font-weight:normal;font-style:normal;-webkit-text-stroke:0.3px #e8e6e5;">Utilization</div>
<div class="t" style="left:1658.0px;top:1320.5px;font-size:27px;line-height:27px;color:#e8e6e5;font-weight:normal;font-style:normal;-webkit-text-stroke:0.3px #e8e6e5;">62,5 %</div>
<div class="r" style="left:1678px;top:1250px;width:402px;height:36px;background:#dad6d4;box-shadow:0 1px 2px rgba(0,0,0,0.3);"></div>
<div class="t" style="left:1691.0px;top:1257.4px;font-size:23.2px;line-height:23.2px;color:#3a3a3a;font-weight:normal;font-style:normal;-webkit-text-stroke:0.3px #3a3a3a;">Expected work exceeds given value.</div>
<svg class="r" style="left:700px;top:30px;" width="42" height="42" viewBox="0 0 42 42"><path d="M21,6 V36 M6,21 H36" stroke="#5a5a5a" stroke-width="2.2"/></svg>
<div class="r" style="left:751px;top:32px;width:1px;height:40px;background:#dcdcdc;"></div>
<svg class="r" style="left:762px;top:44px;" width="24" height="18" viewBox="0 0 24 18"><path d="M5,5 L12,12 L19,5" fill="none" stroke="#b8b8b8" stroke-width="2.6" stroke-linecap="round" stroke-linejoin="round"/></svg>
<svg class="r" style="left:820px;top:32px;" width="60" height="40" viewBox="0 0 60 40"><g stroke="#b8b8b8" stroke-width="2" fill="none"><path d="M4,4.5 H56 M26,15 H56 M26,25 H56 M26,35 H56"/><path d="M8,15 L19.5,25 L8,35"/></g></svg>
<div class="r" style="left:888px;top:32px;width:1px;height:40px;background:#dcdcdc;"></div>
<svg class="r" style="left:898px;top:32px;" width="60" height="40" viewBox="0 0 60 40"><g stroke="#5a5a5a" stroke-width="2.2" fill="none"><path d="M4,4.5 H56 M4,15 H34 M4,25 H34 M4,35 H34"/><path d="M52,15 L41,25 L52,35"/></g></svg>
<svg class="r" style="left:994px;top:34px;" width="36" height="36" viewBox="0 0 36 36"><g transform="scale(0.84)"><g fill="none" stroke="#bcbcbc" stroke-width="3.7" stroke-linecap="round"><path d="M15,19 L6.5,27.5 A6.2,6.2 0 0 0 15.3,36.3 L23.5,28"/><path d="M27,23 L35.5,14.5 A6.2,6.2 0 0 0 26.7,5.7 L18.5,14"/></g><path d="M14.5,27.5 L27.5,14.5" stroke="#d2d2d2" stroke-width="4.6" stroke-linecap="round"/></g></svg>
<div class="r" style="left:1043px;top:32px;width:1px;height:40px;background:#dcdcdc;"></div>
<svg class="r" style="left:1054px;top:44px;" width="24" height="18" viewBox="0 0 24 18"><path d="M5,5 L12,12 L19,5" fill="none" stroke="#b8b8b8" stroke-width="2.6" stroke-linecap="round" stroke-linejoin="round"/></svg>
<svg class="r" style="left:1118px;top:32px;" width="40" height="40" viewBox="0 0 40 40"><circle cx="19.7" cy="20" r="16" fill="none" stroke="#5a5a5a" stroke-width="2.2"/><g fill="#5a5a5a"><circle cx="12.5" cy="20" r="2.4"/><circle cx="19.7" cy="20" r="2.4"/><circle cx="27" cy="20" r="2.4"/></g></svg>
<svg class="r" style="left:1163px;top:42px;" width="26" height="20" viewBox="0 0 26 20"><path d="M6.5,7 L12.7,13.5 L19,7" fill="none" stroke="#5a5a5a" stroke-width="3" stroke-linecap="round" stroke-linejoin="round"/></svg>
<svg class="r" style="left:1288px;top:32px;" width="40" height="40" viewBox="0 0 40 40"><circle cx="20.05" cy="19.9" r="15.5" fill="none" stroke="#5a5a5a" stroke-width="2.5"/><path d="M15.4,15.6 C15.6,13.5 17.5,12.2 20,12.2 C22.8,12.2 25,14 25,16.3 C25,18.5 23.5,19.3 21.7,20.5 C20.4,21.4 19.8,22 19.8,23.8" fill="none" stroke="#5a5a5a" stroke-width="2.5" stroke-linecap="round"/><circle cx="19.8" cy="26.6" r="1.6" fill="#5a5a5a"/></svg>
<svg class="r" style="left:1364px;top:30px;" width="40" height="44" viewBox="0 0 40 44"><path d="M19.5,4 C17.5,4 17,5.5 17,6.5 C11,8 9,13 9,19 V27 L4,32 Q3.5,34 5.5,34 H33.5 Q35.5,34 35,32 L30,27 V19 C30,13 28,8 22,6.5 C22,5.5 21.5,4 19.5,4 Z" fill="#f3ae3d"/><path d="M14.5,36 H24.5 A5,5 0 0 1 14.5,36 Z" fill="#f3ae3d"/></svg>
<svg class="r" style="left:1448px;top:32px;" width="24" height="38" viewBox="0 0 24 38"><path d="M9.3,2 L19.4,2 L15.6,11.1 L18.2,11.1 L13.3,21.9 L15.9,22.2 L5.3,35.8 L8.7,24.2 L5.3,24.2 L8.7,12.7 L5.3,12.7 Z" fill="#666"/></svg>
<svg class="r" style="left:1512px;top:31px;" width="40" height="40" viewBox="0 0 40 40"><path d="M3.2,36.2 V32 C3.2,28.5 7,27.5 12,25.5 C14.5,24.5 15,23 14.5,21 C13.5,18.5 13.3,17 13.5,15 C13,13 13.3,11 13.3,9.5 C13.3,5.5 16,3.05 19.9,3.05 C23.8,3.05 26.8,5.5 26.8,9.5 C26.8,11 27,13 26.5,15 C26.7,17 26.5,18.5 25.5,21 C25,23 25.5,24.5 28,25.5 C33,27.5 36.6,28.5 36.6,32 V36.2 Z" fill="none" stroke="#5a5a5a" stroke-width="2.2" stroke-linejoin="round"/></svg>
<svg class="r" style="left:1648px;top:32px;" width="40" height="40" viewBox="0 0 40 40"><g fill="none" stroke="#5a5a5a" stroke-width="2.2"><path d="M4.05,19.5 A16,16 0 0 1 33.15,10.7"/><path d="M36.05,21 A16,16 0 0 1 6.94,29.1"/></g><path d="M29,13.3 L36.8,8.1 L36.8,17 Z" fill="#5a5a5a"/><path d="M3.05,23.1 L10.8,26.3 L3.05,31.7 Z" fill="#5a5a5a"/></svg>
<svg class="r" style="left:1720px;top:32px;" width="40" height="40" viewBox="0 0 40 40"><circle cx="20.1" cy="19.9" r="15.7" fill="none" stroke="#5a5a5a" stroke-width="2.3"/><g stroke="#8f8f8f" stroke-width="1.5" fill="none"><path d="M16.6,12.4 L19.2,5.5 M16.6,12.4 L8,11.6 M16.6,12.4 L27.3,19.05 M16.6,12.4 L14.6,25.4 M27.3,19.05 Q19,20 14.6,25.4 M27.3,19.05 L34.8,18.8 M27.3,19.05 L33.4,24.2 M14.6,25.4 L10.3,30.6 M14.6,25.4 L16,34"/></g><g fill="#5a5a5a"><circle cx="16.6" cy="12.4" r="3"/><circle cx="27.3" cy="19.05" r="3"/><circle cx="14.6" cy="25.4" r="3"/></g></svg>
<svg class="r" style="left:1850px;top:28px;" width="50" height="47" viewBox="0 0 50 47"><path d="M29.5,20.5 L13.5,36.5" stroke="#a3a3a3" stroke-width="5.5" stroke-linecap="round"/>
<circle cx="34.5" cy="15.5" r="7.2" fill="#a3a3a3"/><circle cx="38" cy="12" r="4.3" fill="#f5f4f3"/><path d="M38,12 L45,5 L45,1 L36,1 Z" fill="#f5f4f3"/>
<circle cx="13.4" cy="36.5" r="1.5" fill="#f5f4f3"/>
<path d="M10,8 L30,28" stroke="#f5f4f3" stroke-width="7"/>
<path d="M11,9 L16.5,14.5" stroke="#666" stroke-width="6"/>
<path d="M16,14 L29,27" stroke="#666" stroke-width="3"/>
<rect x="-8.5" y="-3.4" width="17" height="6.8" rx="3.4" fill="#f5f4f3" stroke="#666" stroke-width="2.1" transform="translate(35.2,33.2) rotate(45)"/>
<path d="M26.5,27 L29,24.5 L31.5,27 L29,29.5 Z" fill="#666"/></svg>
<svg class="r" style="left:1930px;top:32px;" width="48" height="38" viewBox="0 0 48 38"><rect x="3" y="3" width="42" height="32" rx="6" fill="none" stroke="#616161" stroke-width="2.6"/><rect x="6" y="23.5" width="36" height="8" fill="#616161"/></svg>
<div class="r" style="left:1988px;top:32px;width:1px;height:40px;background:#dcdcdc;"></div>
<svg class="r" style="left:2000px;top:32px;" width="48" height="38" viewBox="0 0 48 38"><rect x="3" y="3" width="42" height="32" rx="6" fill="none" stroke="#2a6ae9" stroke-width="2.6"/><rect x="34" y="5.8" width="7.5" height="26" fill="#2a6ae9"/></svg>
<svg class="r" style="left:1152px;top:114px;" width="40" height="42" viewBox="0 0 40 42"><path d="M5.6,10.5 C9,14 15,17 16.9,22 C18.3,26 18.9,30 18.9,38 H22.3 C22.3,31 22.6,27 23.3,24.9 L34.2,10.5 Z" fill="#e6e6e6"/>
<ellipse cx="19.9" cy="8.8" rx="14.8" ry="3.9" fill="#2c2928" stroke="#e6e6e6" stroke-width="2.2"/>
<circle cx="28.6" cy="22.6" r="4.3" fill="none" stroke="#e6e6e6" stroke-width="2.2"/></svg>
<svg class="r" style="left:1228px;top:114px;" width="48" height="42" viewBox="0 0 48 42"><path d="M20,5.1 H5.3 V36.8 H20" fill="none" stroke="#e6e6e6" stroke-width="2.3"/>
<rect x="10" y="10.1" width="34" height="5.7" fill="#e6e6e6"/><rect x="10" y="18.2" width="18" height="5.4" fill="#e6e6e6"/><rect x="10" y="26.3" width="26" height="5.3" fill="#e6e6e6"/></svg>
<svg class="r" style="left:1300px;top:110px;" width="60" height="52" viewBox="0 0 60 52"><g transform="translate(33.7,24.8) rotate(45)">
<rect x="-2.8" y="-20" width="5.6" height="16" rx="2.8" fill="#e6e6e6"/>
<path d="M-3.2,-6 C-3.2,0 -11,0.5 -11,3.5 V5.2 H11 V3.5 C11,0.5 3.2,0 3.2,-6 Z" fill="#e6e6e6"/>
<path d="M-11.5,6.4 H11.5 V15 Q11.5,17.5 9,17.5 H7 Q4.6,17.5 4.6,15 V10.5 H3 V17.5 H-9 Q-11.5,17.5 -11.5,15 Z" fill="#9b9b9b"/>
</g></svg>
<svg class="r" style="left:1390px;top:113px;" width="48" height="46" viewBox="0 0 48 46"><path d="M9.5,35 L24.3,21.9" stroke="#e6e6e6" stroke-width="7.4" stroke-linecap="round"/>
<circle cx="9.6" cy="34.9" r="2.3" fill="#2c2928"/>
<circle cx="30.4" cy="14.5" r="9.3" fill="#e6e6e6"/>
<circle cx="33.4" cy="11.5" r="4.4" fill="#2c2928"/>
<path d="M33.4,11.5 L33.4,1 L46,1 L46,11.5 Z" fill="#2c2928"/></svg>
</body></html>
